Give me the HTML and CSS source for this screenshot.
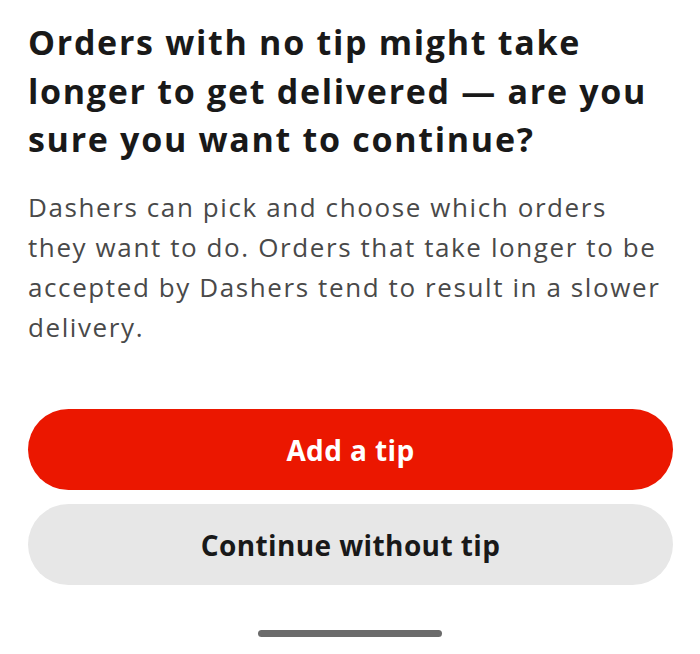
FILE: index.html
```html
<!DOCTYPE html>
<html>
<head>
<meta charset="utf-8">
<link rel="stylesheet" href="styles.css">
</head>
<body>
<div class="sheet">
  <h1 class="title">Orders with no tip might take longer to get delivered — are you sure you want to continue?</h1>
  <p class="desc">Dashers can pick and choose which orders they want to do. Orders that take longer to be accepted by Dashers tend to result in a slower delivery.</p>
  <div class="actions">
    <button class="btn btn-primary">Add a tip</button>
    <button class="btn btn-secondary">Continue without tip</button>
  </div>
  <div class="home-bar"><span class="home-indicator"></span></div>
</div>
</body>
</html>
```
FILE: styles.css
```css
html, body {
  margin: 0;
  padding: 0;
  background: #ffffff;
}
.sheet {
  width: 700px;
  height: 654px;
  box-sizing: border-box;
  padding: 18px 28px 0 28px;
  font-family: "Open Sans", "Noto Sans", sans-serif;
  display: flex;
  flex-direction: column;
}
.title {
  margin: 0;
  font-size: 34px;
  line-height: 48.5px;
  font-weight: 700;
  color: #191919;
  letter-spacing: 1.7px;
}
.desc {
  margin: 23.5px 0 0 0;
  font-size: 26px;
  line-height: 40px;
  font-weight: 400;
  color: #494949;
  letter-spacing: 1.6px;
}
.actions {
  margin-top: 62px;
  display: flex;
  flex-direction: column;
  gap: 14px;
}
.btn {
  width: 645px;
  height: 81px;
  border: none;
  border-radius: 41px;
  font-family: inherit;
  font-size: 28px;
  font-weight: 700;
  letter-spacing: 0.4px;
  padding: 0;
}
.btn-primary {
  background: #eb1700;
  color: #ffffff;
}
.btn-secondary {
  background: #e7e7e7;
  color: #191919;
}
.home-bar {
  margin-top: 45px;
  display: flex;
  justify-content: center;
}
.home-indicator {
  width: 184px;
  height: 7px;
  border-radius: 4px;
  background: #6b6b6b;
}
```
